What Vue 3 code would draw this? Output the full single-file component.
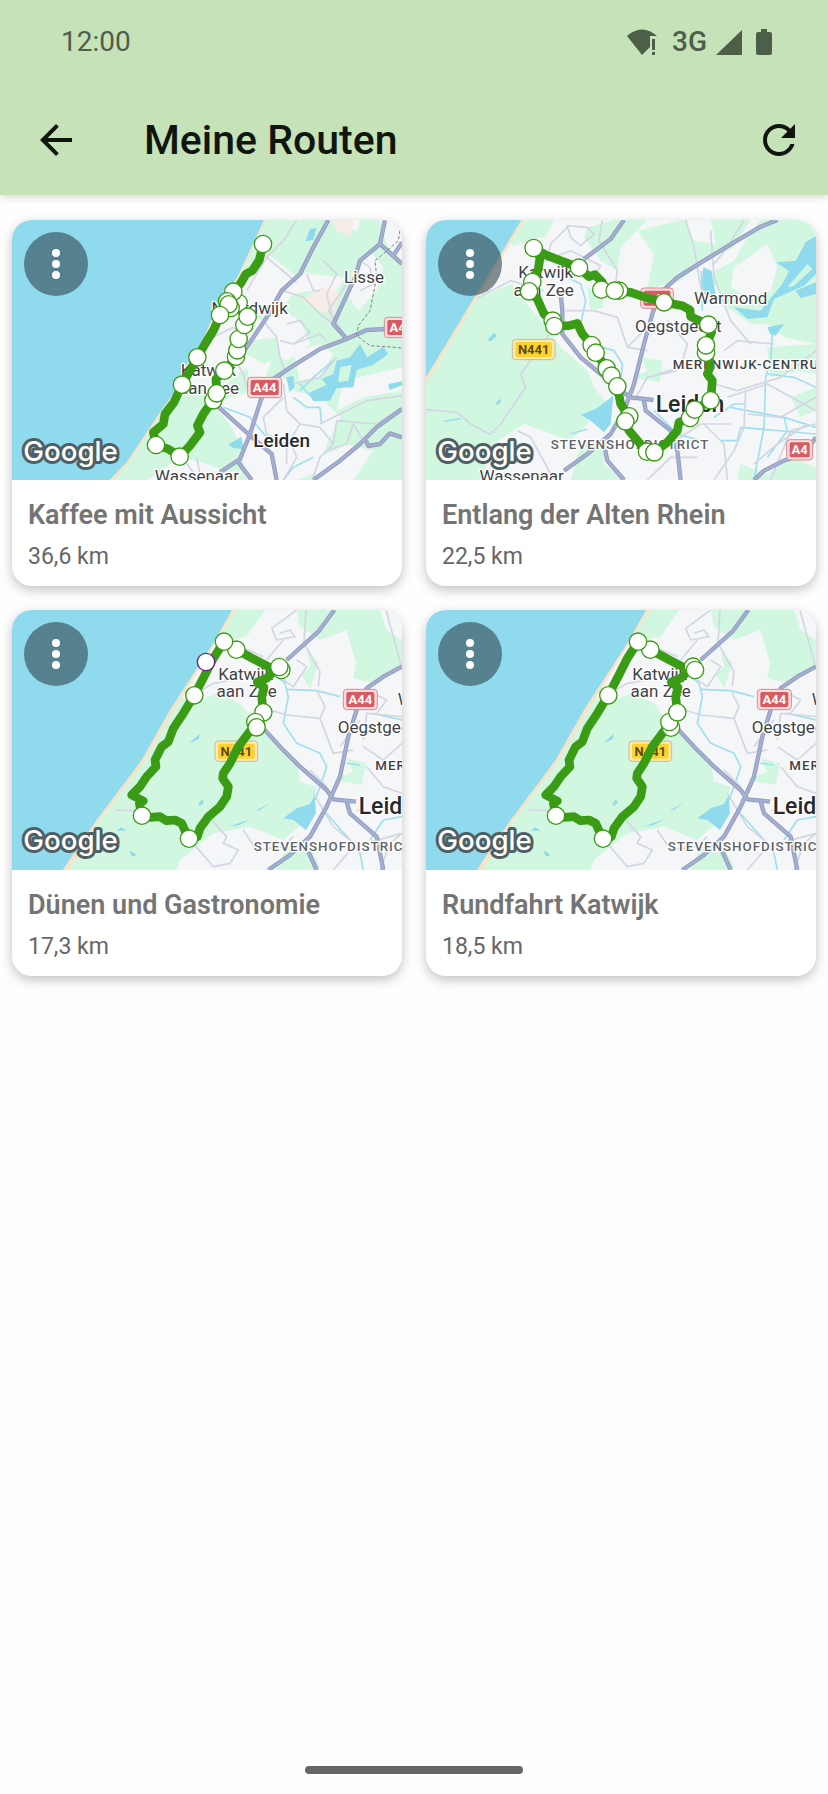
<script setup>
const GREEN = '#d2f7e0'
const URBAN = '#f5f6f8'
const WATER = '#90daee'

const noordwijkBase = {
  viewBox: '36 28 1170 780',
  areas: [
    { fill: GREEN, d: 'M36 28H1206V808H36Z' },
    { fill: URBAN, d: 'M790 120L880 190L905 215L850 290L800 320L740 300L720 240Z' },
    { fill: URBAN, d: 'M960 150L990 28H1080L1060 110L1040 200L1000 250L930 240L880 250L900 200Z' },
    { fill: GREEN, d: 'M980 28L1070 60L1080 130L1030 200L930 190L900 170Z' },
    { fill: URBAN, d: 'M660 330L720 300L790 330L850 300L900 330L930 400L860 450L820 430L790 520L850 500L880 540L960 560L1020 620L980 700L960 780L890 808H740L720 700L690 640L640 590L660 540L560 530L600 430Z' },
    { fill: GREEN, d: 'M760 390L830 380L840 440L790 460L740 430Z' },
    { fill: GREEN, d: 'M600 540L680 520L740 470L760 540L690 560L640 590Z' },
    { fill: URBAN, d: 'M1060 180L1110 120L1150 170L1130 240L1075 300L1040 250Z' },
    { fill: URBAN, d: 'M1140 28H1206V150L1160 100Z' },
    { fill: URBAN, d: 'M880 420L960 400L1000 430L960 500L900 510Z' },
    { fill: URBAN, d: 'M470 790L540 740L620 760L700 790L720 808H440Z' },
    { fill: URBAN, d: 'M960 740L1040 700L1120 720L1060 808H940Z' },
    { fill: URBAN, d: 'M1030 510L1206 470V540L1090 560L1010 600Z' },
    { fill: '#f5ede5', d: 'M995 28H1062L1050 78L1010 60Z' },
    { fill: '#f5ede5', d: 'M905 270L965 230L1020 245L1000 315L960 300Z' },
    { fill: WATER, d: 'M930 55L950 52L940 88L916 92Z' },
    { fill: WATER, d: 'M1080 400L1102 440L1150 408L1165 430L1120 462L1070 478L1060 530L1010 532L990 570L940 572L925 548L980 522L965 504L1000 490L1010 450L1050 440Z' },
    { fill: GREEN, d: 'M1020 470L1055 462L1045 510L1015 515Z' },
    { fill: WATER, d: 'M860 500L880 496L884 530L868 544Z' },
    { fill: WATER, d: 'M685 702L724 678L732 716L700 712Z' },
    { fill: WATER, d: 'M1165 520L1206 512V524L1168 538Z' },
    { fill: '#f7e3c6', d: 'M798 28L720 195L655 300L595 430L535 540L485 610L435 685L385 760L340 808H320L480 560L660 240L770 28Z' },
    { fill: WATER, d: 'M36 28H792L714 195L649 298L590 426L530 535L480 605L430 680L380 755L328 808H36Z' }
  ],
  streams: ['M670 590L750 620L800 680L850 700', 'M880 560L920 590L960 590L965 640', 'M900 520L930 555', 'M850 808L880 770L940 740', 'M1000 450L940 500L900 540'],
  minor: [
    'M890 28L850 90L800 140L860 190L890 215', 'M800 140L740 240', 'M850 240L910 260L960 310L1000 340', 'M790 330L830 380L840 440L855 485',
    'M860 340L900 330L930 365L880 400L840 390', 'M880 400L960 370L980 390', 'M1206 555L1100 570L1020 610L960 640', 'M1206 590L1130 640L1010 630L1000 700L960 740L940 800',
    'M850 520L860 600L900 640L960 650L1000 700', 'M880 520L960 500L1010 440', 'M1040 220L985 300L1040 380', 'M560 760L600 808', 'M590 740L600 790L680 790', 'M850 560L790 620L800 670L860 700L860 760',
    'M700 440L730 490L740 530', 'M640 380L700 350L740 400', 'M1080 150L1110 170L1120 220L1080 240', 'M970 150L1010 190L980 250L1000 330', 'M920 190L940 240L960 240', 'M900 640L870 690L890 740L850 808', 'M1090 690L1060 640L1040 700L980 720'
  ],
  major: [
    'M985 28L940 110L900 190L845 240L800 320L740 410L700 470', 'M1155 28L1140 100L1080 150L1065 200L1000 340L1040 385', 'M1160 355L1100 358L1040 385L960 415L880 465L805 515L782 570L750 670L720 745L660 785',
    'M1206 595L1130 650L1080 700L1020 750L940 808', 'M1140 100L1206 160M1180 135L1206 95', 'M640 575L745 670L815 730L830 808', 'M1206 680L1170 668L1140 700L1105 706L1098 690', 'M715 755L755 808'
  ],
  borders: ['M1200 60L1195 90L1150 130L1125 150L1130 200L1110 300L1075 345L1070 375L1110 405L1160 408L1206 412'],
  labels: [
    { x: 1092, y: 217, t: 'Lisse' }, { x: 749, y: 309, t: 'Noordwijk' }, { x: 625, y: 496, t: 'Katwijk' }, { x: 627, y: 549, t: 'aan Zee' },
    { x: 845, y: 710, t: 'Leiden', kind: 'town' }, { x: 591, y: 813, t: 'Wassenaar' }
  ],
  shields: [{ x: 794, y: 530, w: 102, t: 'A44' }, { x: 1204, y: 350, w: 102, t: 'A44' }]
}

const leidenBase = {
  viewBox: '36 28 1170 780',
  areas: [
    { fill: URBAN, d: 'M36 28H1206V808H36Z' },
    { fill: GREEN, d: 'M36 500L190 262L290 220L330 270L390 340L440 410L520 480L540 530L580 580L520 640L470 690L330 640L240 700L200 808H36Z' },
    { fill: GREEN, d: 'M322 28H420L395 78L350 88L300 105L280 90Z' },
    { fill: GREEN, d: 'M520 50L600 28H700L620 110L610 180L560 150L510 80Z' },
    { fill: GREEN, d: 'M670 60L800 28H1010L960 110L870 150L800 210L700 235L720 130Z' },
    { fill: GREEN, d: 'M1040 28H1206V400L1110 380L1060 340L1010 340L940 290L910 230L870 200L960 150L1000 80Z' },
    { fill: URBAN, d: 'M960 170L1060 100L1090 170L1070 240L1000 260L950 230Z' },
    { fill: URBAN, d: 'M815 28H890L905 100L840 90Z' },
    { fill: GREEN, d: 'M680 440L745 450L738 515L655 500L700 480Z' },
    { fill: GREEN, d: 'M520 230L560 240L570 290L530 300Z' },
    { fill: GREEN, d: 'M1060 410L1206 400V490L1150 480L1070 500Z' },
    { fill: GREEN, d: 'M500 700L570 690L570 760L630 808H470Z' },
    { fill: GREEN, d: 'M1130 560L1206 530V600L1160 620Z' },
    { fill: GREEN, d: 'M980 760L1060 790L1130 740L1206 770V808H970Z' },
    { fill: WATER, d: 'M1206 75L1175 95L1145 150L1085 155L1125 180L1105 220L1040 300L960 290L1000 325L1060 320L1080 265L1170 225L1206 190Z' },
    { fill: GREEN, d: 'M1120 230L1180 160L1195 175L1140 225Z' },
    { fill: WATER, d: 'M868 170L892 180L905 250L880 268L862 230Z' },
    { fill: WATER, d: 'M1145 240L1206 215V250L1160 262Z' },
    { fill: WATER, d: 'M1060 350L1110 340L1085 375L1068 370Z' },
    { fill: WATER, d: 'M500 612L545 595L598 555L590 640L570 665L530 630Z' },
    { fill: WATER, d: 'M220 388L240 366L248 376L230 392Z' },
    { fill: WATER, d: 'M246 578L256 564L262 572L250 584Z' },
    { fill: '#f7e3c6', d: 'M320 28L332 28L36 518V490Z' },
    { fill: WATER, d: 'M36 28H322L36 500Z' }
  ],
  streams: ['M440 190L500 220L515 270L500 340L530 400L600 420L625 460L620 510', 'M1075 370L1070 450L1055 500L1050 650L1020 808', 'M1060 490L1140 500L1206 530', 'M920 690H970L980 650L1206 670', 'M950 590L1000 600L1110 620L1120 660L1060 740', 'M900 620L960 580H990', 'M720 600L790 670L860 690', 'M470 670L520 655M90 632L140 624', 'M865 300L862 180', 'M1110 620L1206 650'],
  minor: [
    'M36 596L130 605L170 640L230 672', 'M405 372L320 490L335 530L260 640L230 670', 'M460 45L520 50L540 70L500 105L470 80Z', 'M460 50L410 100L400 150', 'M565 28L555 90L610 180L605 215', 'M455 300L540 300L610 320L640 410L700 420', 'M640 410L700 350', 'M815 28L840 110L860 230L880 250',
    'M890 60L900 200L950 330L1010 400', 'M990 28L940 110L900 160', 'M760 330L820 400L800 470L730 490', 'M940 560L1000 540L1060 520L1206 600', 'M995 540L990 650L960 720L900 808', 'M660 570L700 500L790 480', 'M930 420L970 390L1080 400', 'M900 520L970 540L1100 500L1206 420', 'M870 640L930 700L940 808', 'M1020 760L1090 700L1180 640', 'M310 660L350 680L420 808', 'M390 150L470 120L560 165L540 200', 'M190 262L290 210L390 240', 'M770 700L860 640L950 640', 'M1206 560L1100 620L1000 610', 'M1206 480L1140 460', 'M700 808L770 740L850 740', 'M1070 808L1130 660L1206 640'
  ],
  major: ['M630 28L590 85L510 145', 'M1090 28L1040 48L960 95L870 150L790 200L735 250L715 310L690 400L660 520L630 600L590 670L520 730L450 780', 'M440 250L445 300L445 370L500 440L560 490L620 540L650 560L718 568', 'M690 570L695 600L770 660L790 720L800 808', 'M570 700L580 750L630 808', 'M1206 680L1170 730L1110 750L1050 780L1020 808'],
  borders: [],
  labels: [
    { x: 395, y: 202, t: 'Katwijk' }, { x: 389, y: 256, t: 'aan Zee' }, { x: 950, y: 280, t: 'Warmond' }, { x: 793, y: 364, t: 'Oegstgeest' },
    { x: 828, y: 604, t: 'Leiden', kind: 'city' }, { x: 323, y: 813, t: 'Wassenaar' }, { x: 776, y: 474, t: 'MERENWIJK-CENTRUM', kind: 'district' }, { x: 410, y: 714, t: 'STEVENSHOFDISTRICT', kind: 'district soft' }
  ],
  shields: [{ x: 359, y: 416, w: 128, t: 'N441', yellow: true }, { x: 729, y: 262, w: 98, t: 'A44' }, { x: 1157, y: 717, w: 78, t: 'A4' }]
}

const katwijkBase = {
  viewBox: '36 30 1170 780',
  areas: [
    { fill: URBAN, d: 'M36 30H1206V810H36Z' },
    { fill: GREEN, d: 'M36 810L190 810L540 290L580 310L650 280L720 310L750 350L800 400L890 480L900 545L950 560L930 650L850 720L750 680L640 700L540 780L530 810Z' },
    { fill: GREEN, d: 'M705 30H795L740 110L690 120L650 90Z' },
    { fill: GREEN, d: 'M890 30H1140L1160 90L1206 120V200L1120 250L1060 235L1068 190L1040 90L960 120L900 80Z' },
    { fill: GREEN, d: 'M920 150L955 190L930 265L905 225L930 200Z' },
    { fill: GREEN, d: 'M1040 475L1098 490L1085 555L1000 540L1060 515Z' },
    { fill: GREEN, d: 'M860 740L920 720L960 800L950 810H830Z' },
    { fill: URBAN, d: 'M900 510L960 500L980 560L920 550Z' },
    { fill: WATER, d: 'M850 655L890 625L930 612L944 586L948 640L918 690L880 660Z' },
    { fill: WATER, d: 'M566 430L600 402L596 418Z' },
    { fill: WATER, d: 'M595 612L606 598L612 608L600 618Z' },
    { fill: WATER, d: 'M765 632L810 610L780 630Z' },
    { fill: WATER, d: 'M685 680L750 658L720 674Z' },
    { fill: WATER, d: 'M350 692L364 682L380 692Z' },
    { fill: WATER, d: 'M388 750L410 764L396 770Z' },
    { fill: '#f7e3c6', d: 'M694 30H708L520 335L430 490L300 660L206 810H186L300 645L420 480L510 320Z' },
    { fill: WATER, d: 'M36 30H696L640 130L512 326L425 480L290 660L188 810H36Z' }
  ],
  streams: ['M820 220L855 250L865 290L850 370L890 430L960 460L980 500L960 560L945 600', 'M860 268L950 272L1020 290', 'M1120 340L1206 360', 'M970 630L1050 720L1080 760L1090 810', 'M1206 650L1150 660L1110 720', 'M1040 490L1080 495'],
  minor: [
    'M815 85L890 30M815 85L830 120L885 110L870 90L840 100', 'M918 30L912 130L960 215L955 260', 'M1158 30L1206 205', 'M720 140L790 170', 'M800 180L850 120', 'M580 285L640 250L700 240', 'M810 330L860 345L960 355L975 320L950 270',
    'M960 355L1000 460L1060 450', 'M1090 420L1100 340L1206 350', 'M1020 440L1080 360', 'M1206 430L1150 480L1090 440', 'M1100 500L1150 560L1206 580', 'M345 630L425 632', 'M567 716L640 800', 'M630 655L680 710L670 730L715 750L690 790L640 800', 'M730 690L770 750L850 740L880 710', 'M940 580L1000 680L1050 720', 'M890 180L920 200L880 260L850 240', 'M930 510L980 560', 'M1000 810L1060 740L1206 700', 'M1100 270L1160 300L1130 340', 'M1070 630L1206 640', 'M1140 810L1170 730L1206 700'
  ],
  major: ['M1003 30L955 95L860 180', 'M1206 200L1150 230L1100 265L1070 330L1045 410L1020 530L980 620L930 710L870 765L805 810', 'M790 385L840 440L900 500L980 570L1000 598L1068 605', 'M1040 605L1050 640L1130 710L1150 810', 'M925 755L950 810'],
  borders: [],
  labels: [
    { x: 737, y: 239, t: 'Katwijk' }, { x: 740, y: 292, t: 'aan Zee' }, { x: 1143, y: 400, t: 'Oegstgeest' }, { x: 1303, y: 316, t: 'Warmond' },
    { x: 1179, y: 641, t: 'Leiden', kind: 'city' }, { x: 1126, y: 511, t: 'MERENWIJK-CENTRUM', kind: 'district' }, { x: 761, y: 752, t: 'STEVENSHOFDISTRICT', kind: 'district soft' }
  ],
  shields: [{ x: 1081, y: 298, w: 102, t: 'A44' }, { x: 709, y: 453, w: 128, t: 'N441', yellow: true }]
}

const katwijkRoute = 'M672 125L709 149L770 182L825 210L800 235L772 246L792 262L785 290L790 337L768 370L745 400L715 440L690 490L670 520L668 535L685 560L680 590L660 620L625 650L600 685L592 710L566 716L545 670L525 660L500 662L480 650L450 652L426 647L418 610L430 603L395 585L420 560L440 530L468 500L465 480L485 440L505 425L520 385L550 340L583 286L612 230L640 175L672 125'

const routes = [
  {
    name: 'Kaffee mit Aussicht', km: '36,6 km', map: noordwijkBase,
    track: 'M789 100L778 148L757 180L738 190L722 218L700 245L680 290L660 315L640 360L618 395L592 440L570 480L546 522L522 575L495 610L490 640L460 665L468 703L505 715L540 738L570 705L600 665L592 645L610 610L640 567L650 548L648 505L673 480L708 440L712 420L716 385L735 343L743 318L722 300L715 275L700 245',
    pins: [[789, 100], [716, 277], [700, 243], [681, 272], [692, 292], [686, 281], [660, 313], [708, 438], [712, 419], [716, 385], [733, 343], [743, 318], [592, 440], [546, 522], [673, 480], [640, 569], [650, 548], [468, 703], [539, 738]]
  },
  {
    name: 'Entlang der Alten Rhein', km: '22,5 km', map: leidenBase,
    track: 'M359 112L400 135L495 171L525 198L543 192L565 215L562 238L600 240L650 245L700 262L750 275L805 285L828 298L830 318L882 342L893 365L876 404L885 430L888 470L880 490L895 510L890 569L842 597L828 622L795 635L790 660L760 695L721 724L698 722L645 660L634 631L644 616L620 580L610 527L592 495L578 473L545 426L533 402L505 370L490 338L465 345L421 346L415 330L390 310L370 265L345 242L355 212L373 175L378 140L359 112',
    pins: [[359, 112], [495, 171], [615, 240], [562, 237], [602, 240], [750, 275], [883, 342], [876, 426], [876, 404], [890, 569], [828, 622], [842, 597], [699, 723], [721, 725], [646, 617], [634, 632], [578, 473], [592, 495], [610, 527], [533, 403], [545, 426], [416, 330], [421, 346], [355, 214], [345, 242]]
  },
  {
    name: 'Dünen und Gastronomie', km: '17,3 km', map: katwijkBase, track: katwijkRoute,
    pins: [[709, 149], [672, 125], [844, 210], [838, 201], [790, 337], [766, 366], [770, 382], [583, 286], [426, 647], [567, 716]],
    highlight: [618, 186]
  },
  {
    name: 'Rundfahrt Katwijk', km: '18,5 km', map: katwijkBase, track: katwijkRoute,
    pins: [[709, 149], [672, 125], [837, 200], [843, 210], [771, 383], [766, 366], [790, 337], [583, 286], [426, 647], [567, 716]]
  }
]
</script>

<template>
  <div class="screen">
    <header class="header">
      <div class="status">
        <span class="clock">12:00</span>
        <div class="indicators">
          <svg class="wifi" viewBox="0 0 30 26" aria-hidden="true">
            <path d="M0 7C9-1.700 21-1.700 30 7H23V18L15 26Z" />
            <path d="M25 10H28V21H25ZM25 23H28V26H25Z" />
          </svg>
          <span class="network">3G</span>
          <svg class="signal" viewBox="0 0 26 26" aria-hidden="true"><path d="M26 1V26H0Z" /></svg>
          <svg class="battery" viewBox="0 0 16 26" aria-hidden="true">
            <path d="M5 0H11V3H14Q16 3 16 5V24Q16 26 14 26H2Q0 26 0 24V5Q0 3 2 3H5Z" />
          </svg>
        </div>
      </div>
      <div class="toolbar">
        <button class="icon-button" type="button" aria-label="Zurück">
          <svg viewBox="0 0 24 24"><path d="M20 11H7.830l5.590-5.590L12 4l-8 8 8 8 1.410-1.410L7.830 13H20v-2z" /></svg>
        </button>
        <h1>Meine Routen</h1>
        <button class="icon-button" type="button" aria-label="Aktualisieren">
          <svg viewBox="0 0 24 24"><path d="M17.650 6.350C16.200 4.900 14.210 4 12 4c-4.420 0-7.990 3.580-7.990 8s3.570 8 7.990 8c3.730 0 6.840-2.550 7.730-6h-2.080c-.82 2.330-3.040 4-5.650 4-3.310 0-6-2.690-6-6s2.690-6 6-6c1.660 0 3.140.69 4.220 1.780L13 11h7V4l-2.350 2.350z" /></svg>
        </button>
      </div>
    </header>

    <main class="grid">
      <article v-for="route in routes" :key="route.name" class="card">
        <svg class="map" :viewBox="route.map.viewBox" role="img" :aria-label="'Karte: ' + route.name">
          <path v-for="(a, i) in route.map.areas" :key="'a' + i" :d="a.d" :fill="a.fill" />
          <path v-for="d in route.map.streams" :key="d" :d="d" class="stream" />
          <path v-for="d in route.map.minor" :key="d" :d="d" class="minor" />
          <path v-for="d in route.map.major" :key="d" :d="d" class="major" />
          <path v-for="d in route.map.major" :key="'c' + d" :d="d" class="major-core" />
          <path v-for="d in route.map.borders" :key="d" :d="d" class="border" />
          <g v-for="(s, i) in route.map.shields" :key="'s' + i" :class="['shield', { yellow: s.yellow }]">
            <rect class="shield-rim" :x="s.x - s.w / 2" :y="s.y - 30" :width="s.w" height="61" rx="10" />
            <rect class="shield-face" :x="s.x - s.w / 2 + 9" :y="s.y - 22" :width="s.w - 18" height="45" rx="5" />
            <text :x="s.x" :y="s.y + 14">{{ s.t }}</text>
          </g>
          <text v-for="(l, i) in route.map.labels" :key="'l' + i" :x="l.x" :y="l.y" :class="['label', l.kind]">{{ l.t }}</text>
          <path :d="route.track" class="track" />
          <circle v-for="(p, i) in route.pins" :key="'p' + i" :cx="p[0]" :cy="p[1]" r="26" class="pin" />
          <circle v-if="route.highlight" :cx="route.highlight[0]" :cy="route.highlight[1]" r="26" class="pin highlight" />
          <text x="70" y="751" class="brand">Google</text>
        </svg>
        <button class="menu" type="button" :aria-label="'Menü: ' + route.name">
          <svg viewBox="0 0 64 64"><circle cx="32" cy="21" r="4" /><circle cx="32" cy="32" r="4" /><circle cx="32" cy="43" r="4" /></svg>
        </button>
        <div class="info">
          <h2>{{ route.name }}</h2>
          <p>{{ route.km }}</p>
        </div>
      </article>
    </main>

    <div class="home-indicator"></div>
  </div>
</template>

<style>
body {
  margin: 0;
  background: #fefefe;
}
</style>

<style scoped>
.screen {
  display: flex;
  flex-direction: column;
  min-height: 100vh;
  font-family: Roboto, 'Noto Sans', sans-serif;
}
.header {
  background: #c6e2b8;
  box-shadow: 0 2px 8px rgba(0, 0, 0, 0.16);
}
.status {
  display: flex;
  align-items: center;
  justify-content: space-between;
  height: 84px;
  padding: 0 56px 0 61px;
  color: #4d5f49;
}
.clock,
.network {
  font-size: 28px;
  line-height: 32px;
}
.network {
  margin: 0 9px 0 15px;
  font-weight: 500;
}
.indicators {
  display: flex;
  align-items: center;
}
.indicators svg {
  display: block;
  height: 26px;
  fill: currentColor;
}
.wifi {
  width: 30px;
}
.signal {
  width: 26px;
  margin-right: 14px;
}
.battery {
  width: 16px;
}
.toolbar {
  display: flex;
  align-items: center;
  height: 111px;
  padding: 0 25px 0 32px;
}
.toolbar h1 {
  flex: 1;
  margin: 0 0 0 64px;
  color: #10160e;
  font-size: 41px;
  font-weight: 500;
  line-height: 48px;
}
.icon-button {
  width: 48px;
  height: 48px;
  padding: 0;
  border: 0;
  background: none;
}
.icon-button svg {
  display: block;
  fill: #10160e;
}
.grid {
  display: grid;
  grid-template-columns: 1fr 1fr;
  gap: 24px;
  padding: 25px 12px;
}
.card {
  position: relative;
  min-width: 0;
  overflow: hidden;
  border-radius: 20px;
  background: #fff;
  box-shadow: 0 4px 12px rgba(0, 0, 0, 0.24);
}
.map {
  display: block;
  width: 100%;
  aspect-ratio: 3 / 2;
}
.stream,
.minor,
.major,
.major-core,
.border,
.track {
  fill: none;
  stroke-linejoin: round;
}
.stream {
  stroke: #9fe0f0;
  stroke-width: 5px;
}
.minor {
  stroke: #d3d6e3;
  stroke-width: 5px;
}
.major {
  stroke: #929dc0;
  stroke-width: 13px;
}
.major-core {
  stroke: #a5b0d1;
  stroke-width: 7px;
}
.border {
  stroke: #7a8480;
  stroke-width: 3px;
  stroke-dasharray: 10 6;
}
.track {
  stroke: #3a9c14;
  stroke-width: 26px;
}
.pin {
  fill: #fff;
  stroke: #3a9c14;
  stroke-width: 4px;
}
.highlight {
  stroke: #6a1b9a;
}
.label {
  fill: #3f4347;
  stroke: #fff;
  stroke-width: 8px;
  stroke-linejoin: round;
  paint-order: stroke;
  font-size: 51px;
  text-anchor: middle;
}
.town {
  fill: #26292c;
  font-size: 57px;
  font-weight: 500;
}
.city {
  fill: #26292c;
  font-size: 69px;
  font-weight: 500;
}
.district {
  font-size: 40px;
  font-weight: 500;
  letter-spacing: 3px;
  text-anchor: start;
}
.soft {
  fill: #5f6368;
}
.shield text {
  fill: #fff;
  font-size: 39px;
  font-weight: 700;
  text-anchor: middle;
}
.shield-rim {
  fill: #fbdcdc;
  stroke: #dd8a8e;
  stroke-width: 3px;
}
.shield-face {
  fill: #d95b62;
}
.yellow text {
  fill: #5c4a0c;
}
.yellow .shield-rim {
  fill: #fdebae;
  stroke: #c9b79a;
}
.yellow .shield-face {
  fill: #fcd232;
}
.brand {
  fill: #fff;
  stroke: #4f5f63;
  stroke-width: 18px;
  stroke-linejoin: round;
  paint-order: stroke;
  font-family: Inter, Roboto, sans-serif;
  font-size: 83px;
  font-weight: 500;
}
.menu {
  position: absolute;
  top: 12px;
  left: 12px;
  width: 64px;
  height: 64px;
  padding: 0;
  border: 0;
  border-radius: 50%;
  background: rgba(48, 71, 80, 0.6);
}
.menu svg {
  display: block;
  fill: #fff;
}
.info {
  padding: 18px 16px 14px;
}
.info h2 {
  margin: 0;
  color: #747474;
  font-size: 27px;
  font-weight: 600;
  line-height: 34px;
}
.info p {
  margin: 10px 0 0;
  color: #666;
  font-size: 23px;
  line-height: 30px;
}
.home-indicator {
  width: 218px;
  height: 8px;
  margin: auto auto 20px;
  border-radius: 4px;
  background: #666;
}
</style>
